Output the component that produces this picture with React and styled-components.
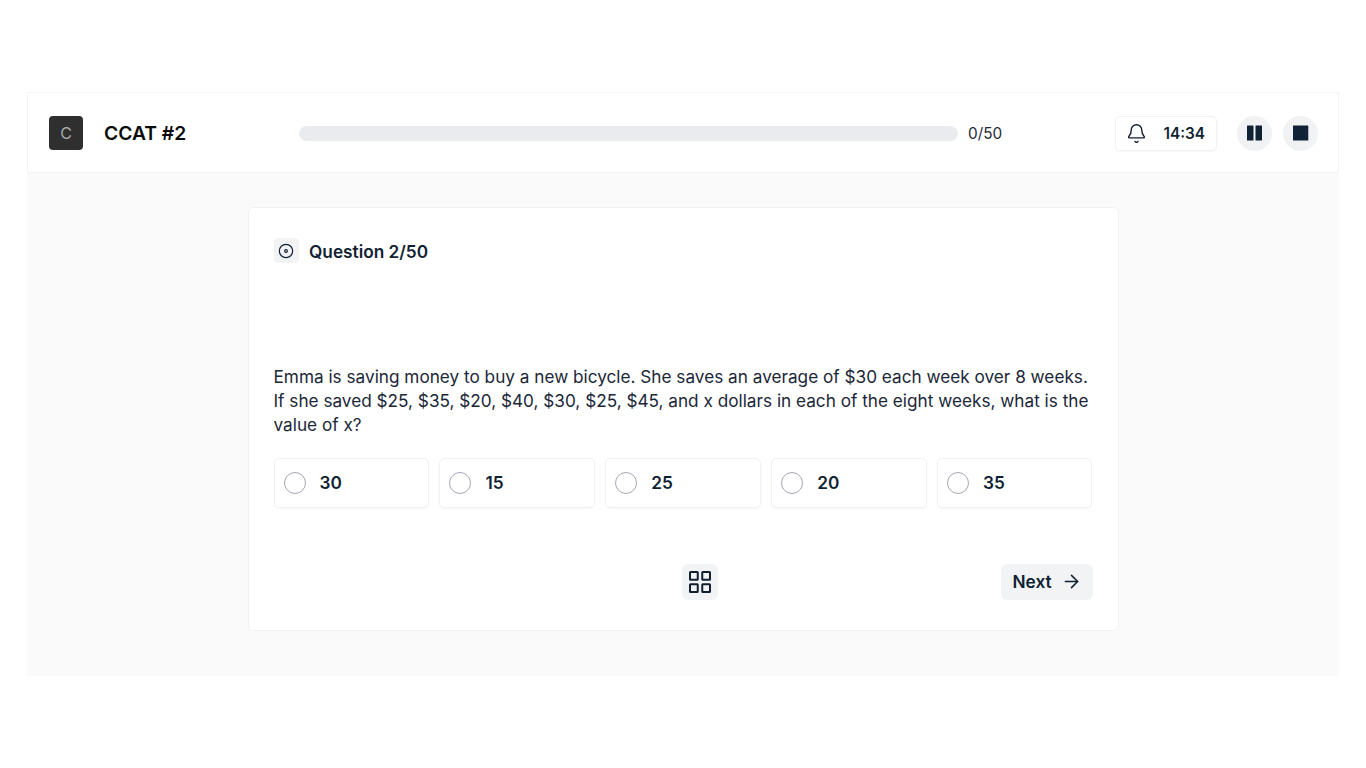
import React from 'react'
import styled, { createGlobalStyle } from 'styled-components'
import { ArrowRight, Bell, Disc } from 'lucide-react'

const options = ['30', '15', '25', '20', '35']

const GlobalStyle = createGlobalStyle`
	body {
		margin: 0;
		background: #fff;
		font-family: 'Inter', sans-serif;
		color: #111827;
	}
`

const App = () => {
	return (
		<Page>
			<GlobalStyle />
			<Frame>
				<Header>
					<Brand>
						<Logo>C</Logo>
						<Title>CCAT #2</Title>
					</Brand>
					<Progress>
						<Track />
						<Count>0/50</Count>
					</Progress>
					<Controls>
						<Timer>
							<Bell size={21} strokeWidth={1.6} />
							<span>14:34</span>
						</Timer>
						<RoundButtons>
							<RoundButton aria-label='Pause'>
								<PauseIcon />
							</RoundButton>
							<RoundButton aria-label='Stop'>
								<StopIcon />
							</RoundButton>
						</RoundButtons>
					</Controls>
				</Header>
				<Main>
					<Card>
						<QuestionHead>
							<HeadIcon>
								<Disc size={16} strokeWidth={1.75} />
							</HeadIcon>
							<HeadText>Question 2/50</HeadText>
						</QuestionHead>
						<QuestionText>
							Emma is saving money to buy a new bicycle. She saves an average of
							$30 each week over 8 weeks. If she saved $25, $35, $20, $40, $30,
							$25, $45, and x dollars in each of the eight weeks, what is the
							value of x?
						</QuestionText>
						<Options>
							{options.map((option) => (
								<Option key={option}>
									<Radio />
									<span>{option}</span>
								</Option>
							))}
						</Options>
						<Footer>
							<span />
							<GridButton aria-label='All questions'>
								<GridIcon />
							</GridButton>
							<NextButton>
								Next
								<ArrowRight size={21} strokeWidth={1.75} />
							</NextButton>
						</Footer>
					</Card>
				</Main>
			</Frame>
		</Page>
	)
}

const PauseIcon = () => (
	<svg width='16' height='16' viewBox='0 0 16 16' fill='#0f2236'>
		<rect x='0' y='0.5' width='6.5' height='15' rx='0.5' />
		<rect x='8.5' y='0.5' width='6.5' height='15' rx='0.5' />
	</svg>
)

const StopIcon = () => (
	<svg width='16' height='16' viewBox='0 0 16 16' fill='#0f2236'>
		<rect x='-0.7' y='0.5' width='16' height='15' rx='0.5' />
	</svg>
)

const GridIcon = () => (
	<svg width='22' height='22' viewBox='0 0 22 22' fill='none' stroke='#111f33' strokeWidth='2'>
		<rect x='1' y='1' width='7.75' height='7.75' rx='0.5' />
		<rect x='13.25' y='1' width='7.75' height='7.75' rx='0.5' />
		<rect x='1' y='13.25' width='7.75' height='7.75' rx='0.5' />
		<rect x='13.25' y='13.25' width='7.75' height='7.75' rx='0.5' />
	</svg>
)

const Page = styled.div`
	padding: 92px 27px;
`

const Frame = styled.div`
	width: 1312px;
	height: 584px;
	display: flex;
	flex-direction: column;
	background: #fafafa;
`

const Header = styled.header`
	height: 81px;
	box-sizing: border-box;
	display: flex;
	align-items: center;
	padding: 1px 20px 0 21px;
	background: #fff;
	border: 1px solid #f3f4f6;
`

const Brand = styled.div`
	width: 250px;
	flex: none;
	display: flex;
	align-items: center;
	gap: 21px;
`

const Logo = styled.div`
	width: 34px;
	height: 34px;
	display: flex;
	align-items: center;
	justify-content: center;
	border-radius: 4px;
	background: #2f2f2f;
	color: #a8a8a8;
	font-size: 16px;
`

const Title = styled.h1`
	margin: 0;
	font-size: 19.3px;
	font-weight: 600;
	color: #0a0a0a;
`

const Progress = styled.div`
	flex: none;
	display: flex;
	align-items: center;
	gap: 10px;
`

const Track = styled.div`
	width: 659px;
	height: 15px;
	border-radius: 8px;
	background: #e9ebef;
`

const Count = styled.span`
	font-size: 15.33px;
	color: #1f2937;
`

const Controls = styled.div`
	margin-left: auto;
	display: flex;
	align-items: center;
	gap: 20px;
`

const Timer = styled.div`
	width: 102px;
	height: 35px;
	box-sizing: border-box;
	display: flex;
	align-items: center;
	justify-content: space-between;
	padding: 0 11px 0 10px;
	border: 1px solid #f1f2f4;
	border-radius: 5px;
	box-shadow: 0 1px 2px rgba(17, 24, 39, 0.04);
	color: #111f33;
	font-size: 15.33px;
	font-weight: 600;
`

const RoundButtons = styled.div`
	display: flex;
	gap: 11px;
`

const RoundButton = styled.button`
	width: 35px;
	height: 35px;
	padding: 0;
	display: flex;
	align-items: center;
	justify-content: center;
	border: none;
	border-radius: 50%;
	background: #f1f2f4;
`

const Main = styled.main`
	flex: 1;
	display: flex;
	justify-content: center;
	padding-top: 34px;
`

const Card = styled.section`
	width: 871px;
	height: 424px;
	box-sizing: border-box;
	padding: 30px 25px 0;
	background: #fff;
	border: 1px solid #f0f1f3;
	border-radius: 6px;
`

const QuestionHead = styled.div`
	display: flex;
	align-items: center;
	gap: 10.5px;
`

const HeadIcon = styled.div`
	width: 25px;
	height: 25px;
	display: flex;
	align-items: center;
	justify-content: center;
	border-radius: 4px;
	background: #f1f3f5;
	color: #111f33;
`

const HeadText = styled.div`
	padding-top: 1px;
	font-size: 17.25px;
	font-weight: 600;
	color: #111f33;
`

const QuestionText = styled.p`
	margin: 102px 0 0;
	font-size: 17.19px;
	line-height: 24px;
	color: #1b2738;
`

const Options = styled.div`
	margin-top: 21px;
	display: grid;
	grid-template-columns: repeat(5, 1fr);
	gap: 10.5px;
`

const Option = styled.div`
	height: 50px;
	box-sizing: border-box;
	display: flex;
	align-items: center;
	gap: 14px;
	padding: 0 0 1px 9px;
	border: 1px solid #f0f1f3;
	border-radius: 5px;
	box-shadow: 0 1px 2px rgba(17, 24, 39, 0.04);
	color: #111f33;
	font-size: 17.25px;
	font-weight: 600;
`

const Radio = styled.span`
	width: 20px;
	height: 20px;
	border: 1px solid #a3a8b3;
	border-radius: 50%;
`

const Footer = styled.div`
	margin-top: 56px;
	display: grid;
	grid-template-columns: 1fr auto 1fr;
	align-items: center;
	padding-left: 34px;
`

const GridButton = styled.button`
	width: 36px;
	height: 36px;
	padding: 0;
	display: flex;
	align-items: center;
	justify-content: center;
	border: none;
	border-radius: 6px;
	background: #f1f3f5;
`

const NextButton = styled.button`
	justify-self: end;
	width: 92px;
	height: 36px;
	padding: 0 0 1px 12px;
	display: flex;
	align-items: center;
	gap: 9px;
	border: none;
	border-radius: 6px;
	background: #f1f3f5;
	color: #111f33;
	font-family: inherit;
	font-size: 17.25px;
	font-weight: 600;
`

export default App
